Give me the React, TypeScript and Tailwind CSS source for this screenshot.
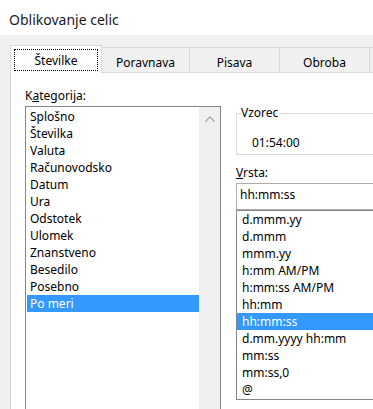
import React from 'react';

const categories = [
  'Splošno', 'Številka', 'Valuta', 'Računovodsko', 'Datum', 'Ura',
  'Odstotek', 'Ulomek', 'Znanstveno', 'Besedilo', 'Posebno', 'Po meri',
];

const formats = [
  'd.mmm.yy', 'd.mmm', 'mmm.yy', 'h:mm AM/PM', 'h:mm:ss AM/PM', 'hh:mm',
  'hh:mm:ss', 'd.mm.yyyy hh:mm', 'mm:ss', 'mm:ss,0', '@',
];

const tabs = [
  { label: 'Poravnava', w: 'w-[88px]' },
  { label: 'Pisava', w: 'w-[90px]' },
  { label: 'Obroba', w: 'w-[90px]' },
  { label: '', w: 'w-[90px]' },
];

export default function App() {
  return (
    <div
      className="w-[373px] h-[409px] overflow-hidden bg-[#f0f0f0] text-black flex flex-col"
      style={{ fontFamily: '"Noto Sans", "Open Sans", sans-serif' }}
    >
      {/* Title bar */}
      <div className="h-[35px] shrink-0 bg-white pl-[9px] pt-[7px]">
        <span className="text-[14px] leading-[20px] text-[#1a1a1a]">Oblikovanje celic</span>
      </div>

      {/* Tabs */}
      <div className="h-[37px] shrink-0 flex items-end pl-[10px] text-[12px] leading-[17px]">
        <div className="relative z-10 w-[92px] h-[28px] -mb-px shrink-0 bg-white border-l border-t border-r border-[#d9d9d9] px-[3px] pt-[3px]">
          <div className="h-[22px] border border-dotted border-black flex items-center justify-center">
            Številke
          </div>
        </div>
        {tabs.map((t, i) => (
          <div
            key={i}
            className={`${t.w} h-[25px] shrink-0 border-t border-r border-[#d9d9d9] flex justify-center pt-[6px]`}
          >
            {t.label}
          </div>
        ))}
      </div>

      {/* Panel */}
      <div className="flex-1 ml-[10px] bg-white border-l border-t border-[#d9d9d9] flex text-[12px] leading-[17px]">
        {/* Left column */}
        <div className="pl-[14px] pt-[14px] shrink-0">
          <div>
            K<span className="underline">a</span>tegorija:
          </div>
          <div className="mt-[2px] w-[196px] h-[330px] border border-[#828790] flex">
            <div className="w-[173px] pl-px pt-px">
              {categories.map((c) => (
                <div
                  key={c}
                  className={
                    c === 'Po meri'
                      ? 'h-[17px] w-[172px] pl-[3px] bg-[#3399ff] text-white'
                      : 'h-[17px] w-[172px] pl-[3px]'
                  }
                >
                  {c}
                </div>
              ))}
            </div>
            <div className="w-[21px] bg-[#f0f0f0] flex justify-center pt-[9px]">
              <svg width="10" height="6" viewBox="0 0 10 6">
                <polyline points="0.5,5.5 5,1 9.5,5.5" fill="none" stroke="#a6a6a6" strokeWidth="1.3" />
              </svg>
            </div>
          </div>
        </div>

        {/* Right column */}
        <div className="pl-[15px] pt-[40px] w-[200px] shrink-0">
          <div className="relative h-[42px] border border-[#dcdcdc] pl-[15px] pt-[20px]">
            <span className="absolute -top-[9px] left-[4px] bg-white pr-px leading-[16px]">Vzorec</span>
            01:54:00
          </div>
          <div className="mt-[9px]">
            <span className="underline">V</span>rsta:
          </div>
          <div className="mt-[2px] h-[27px] border border-[#adadad] pl-[3px] pt-[2px]">hh:mm:ss</div>
          <div className="h-[190px] border border-[#828790]">
            {formats.map((f) => (
              <div
                key={f}
                className={
                  f === 'hh:mm:ss'
                    ? 'h-[17px] pl-[5px] bg-[#3399ff] text-white'
                    : 'h-[17px] pl-[5px]'
                }
              >
                {f}
              </div>
            ))}
          </div>
        </div>
      </div>
    </div>
  );
}
